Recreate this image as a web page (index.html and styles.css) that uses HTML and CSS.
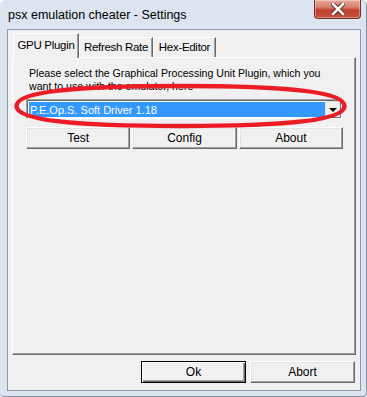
FILE: index.html
```html
<!DOCTYPE html>
<html lang="en">
<head>
    <meta charset="UTF-8">
    <meta name="viewport" content="width=device-width, initial-scale=1.0">
    <title>psx emulation cheater - Settings</title>
    <link rel="stylesheet" href="styles.css">
</head>
<body>
    <div class="window">
        <!-- title bar -->
        <div class="titlebar">
            <span class="title">psx emulation cheater - Settings</span>
            <div class="close">
                <svg width="14" height="12" viewBox="0 0 14 12">
                    <path d="M2 1 L12 11 M12 1 L2 11" stroke="#5a2a24" stroke-width="4.5" stroke-linecap="square"/>
                    <path d="M2 1 L12 11 M12 1 L2 11" stroke="#fff" stroke-width="2.5" stroke-linecap="square"/>
                </svg>
            </div>
        </div>

        <div class="client">
            <!-- tabs -->
            <div class="tabs">
                <div class="tab active">GPU Plugin</div>
                <div class="tab refresh">Refresh Rate</div>
                <div class="tab hex">Hex-Editor</div>
            </div>

            <div class="panel">
                <p class="hint">Please select the Graphical Processing Unit Plugin, which you want to use with the emulator, here</p>

                <div class="combo">
                    <div class="combo-value">P.E.Op.S. Soft Driver 1.18</div>
                    <div class="combo-arrow">
                        <span class="arrow"></span>
                    </div>
                </div>

                <div class="plugin-buttons">
                    <div class="btn">Test</div>
                    <div class="btn">Config</div>
                    <div class="btn">About</div>
                </div>
            </div>

            <div class="footer">
                <div class="btn default">Ok</div>
                <div class="btn">Abort</div>
            </div>
        </div>

        <!-- red marker round the combo -->
        <svg class="marker" width="367" height="60" viewBox="0 0 367 60">
            <path d="M16.5,26 C16.5,12.4 69,6 180.5,6 C292,6 344.5,12.4 344.5,26 C344.5,39.6 292,46 180.5,46 C69,46 16.5,39.6 16.5,26 Z" fill="none" stroke="#ec1c24" stroke-width="4.5"/>
        </svg>
    </div>
</body>
</html>
```

FILE: styles.css
```css
body {
    margin: 0;
    padding: 0;
    background-color: #fff;
}

.window {
    position: relative;
    width: 367px;
    height: 397px;
    box-sizing: border-box;
    background-color: #dbe4ef;
    border-radius: 6px 6px 4px 4px;
    border-right: 1px solid #8591a0;
    border-bottom: 1px solid #8591a0;
    font-family: "Liberation Sans", Arial, sans-serif;
    color: #000;
    overflow: hidden;
}

.titlebar {
    display: flex;
    justify-content: space-between;
    align-items: flex-start;
    height: 29px;
}

.title {
    padding: 8px 0 0 8px;
    font-size: 12.5px;
    color: #000;
}

.close {
    display: flex;
    align-items: center;
    justify-content: center;
    width: 45px;
    height: 18px;
    margin-right: 5px;
    border: 1px solid #6d3129;
    border-top: none;
    border-radius: 0 0 4px 4px;
    background: linear-gradient(#e6a898 0%, #d6806d 40%, #c0412e 55%, #c7503a 100%);
    box-shadow: inset 0 0 0 1px rgba(255, 255, 255, 0.35);
}

.client {
    margin: 0 5px 0 7px;
    height: 362px;
    box-sizing: border-box;
    border: 1px solid #8c99a8;
    background-color: #f0f0f0;
    padding: 3px 4px 0 4px;
    font-size: 11px;
}

.tabs {
    display: flex;
    align-items: flex-end;
    height: 24px;
    padding-left: 1px;
    position: relative;
    z-index: 1;
}

.tab {
    height: 20px;
    line-height: 19px;
    box-sizing: border-box;
    border-top: 1px solid #fff;
    border-left: 1px solid #fff;
    border-right: 1px solid #696969;
    box-shadow: inset -1px 0 #a0a0a0;
    background-color: #f0f0f0;
    font-size: 11.5px;
    text-align: center;
    letter-spacing: -0.3px;
}

.tab.active {
    width: 66px;
    height: 25px;
    line-height: 22px;
    margin-bottom: -1px;
}

.tab.refresh {
    width: 74px;
}

.tab.hex {
    width: 63px;
}

.panel {
    height: 298px;
    box-sizing: border-box;
    border-top: 1px solid #fff;
    border-left: 1px solid #fff;
    border-right: 1px solid #696969;
    border-bottom: 1px solid #696969;
    box-shadow: inset -1px -1px #a0a0a0;
    padding: 9px 0 0 13px;
}

.hint {
    margin: 0 0 0 3px;
    width: 310px;
    line-height: 13px;
    font-size: 10.6px;
}

.combo {
    display: flex;
    width: 316px;
    height: 20px;
    margin-top: 6px;
    box-sizing: border-box;
    border-top: 1px solid #a0a0a0;
    border-left: 1px solid #a0a0a0;
    border-right: 1px solid #fff;
    border-bottom: 1px solid #fff;
    box-shadow: inset 1px 1px #696969;
    padding: 1px 0 0 1px;
    background-color: #fff;
}

.combo-value {
    flex: 1;
    margin: 1px 0 1px 1px;
    background-color: #3399ff;
    color: #fff;
    font-size: 11px;
    line-height: 16px;
    padding-left: 1px;
}

.combo-arrow {
    flex: none;
    display: flex;
    align-items: center;
    justify-content: center;
    width: 16px;
    box-sizing: border-box;
    background-color: #f0f0f0;
    border-top: 1px solid #e3e3e3;
    border-left: 1px solid #e3e3e3;
    border-right: 1px solid #696969;
    border-bottom: 1px solid #696969;
}

.arrow {
    display: block;
    width: 0;
    height: 0;
    border-left: 4px solid transparent;
    border-right: 4px solid transparent;
    border-top: 4px solid #000;
}

.plugin-buttons {
    display: flex;
    gap: 2px;
    width: 317px;
    margin-top: 8px;
}

.btn {
    flex: 1;
    height: 22px;
    box-sizing: border-box;
    border-top: 1px solid #fff;
    border-left: 1px solid #fff;
    border-right: 1px solid #696969;
    border-bottom: 1px solid #696969;
    box-shadow: inset -1px -1px #a0a0a0, inset 1px 1px #e3e3e3;
    background-color: #f0f0f0;
    text-align: center;
    line-height: 20px;
    font-size: 12px;
}

.footer {
    display: flex;
    justify-content: flex-end;
    gap: 4px;
    padding: 6px 1px 0 0;
}

.footer .btn {
    flex: none;
    width: 105px;
    height: 22px;
}

.btn.default {
    border: 1px solid #000;
    box-shadow: inset 1px 1px #fff, inset -1px -1px #696969, inset -2px -2px #a0a0a0;
}

.marker {
    position: absolute;
    left: 0;
    top: 80px;
    pointer-events: none;
}
```
